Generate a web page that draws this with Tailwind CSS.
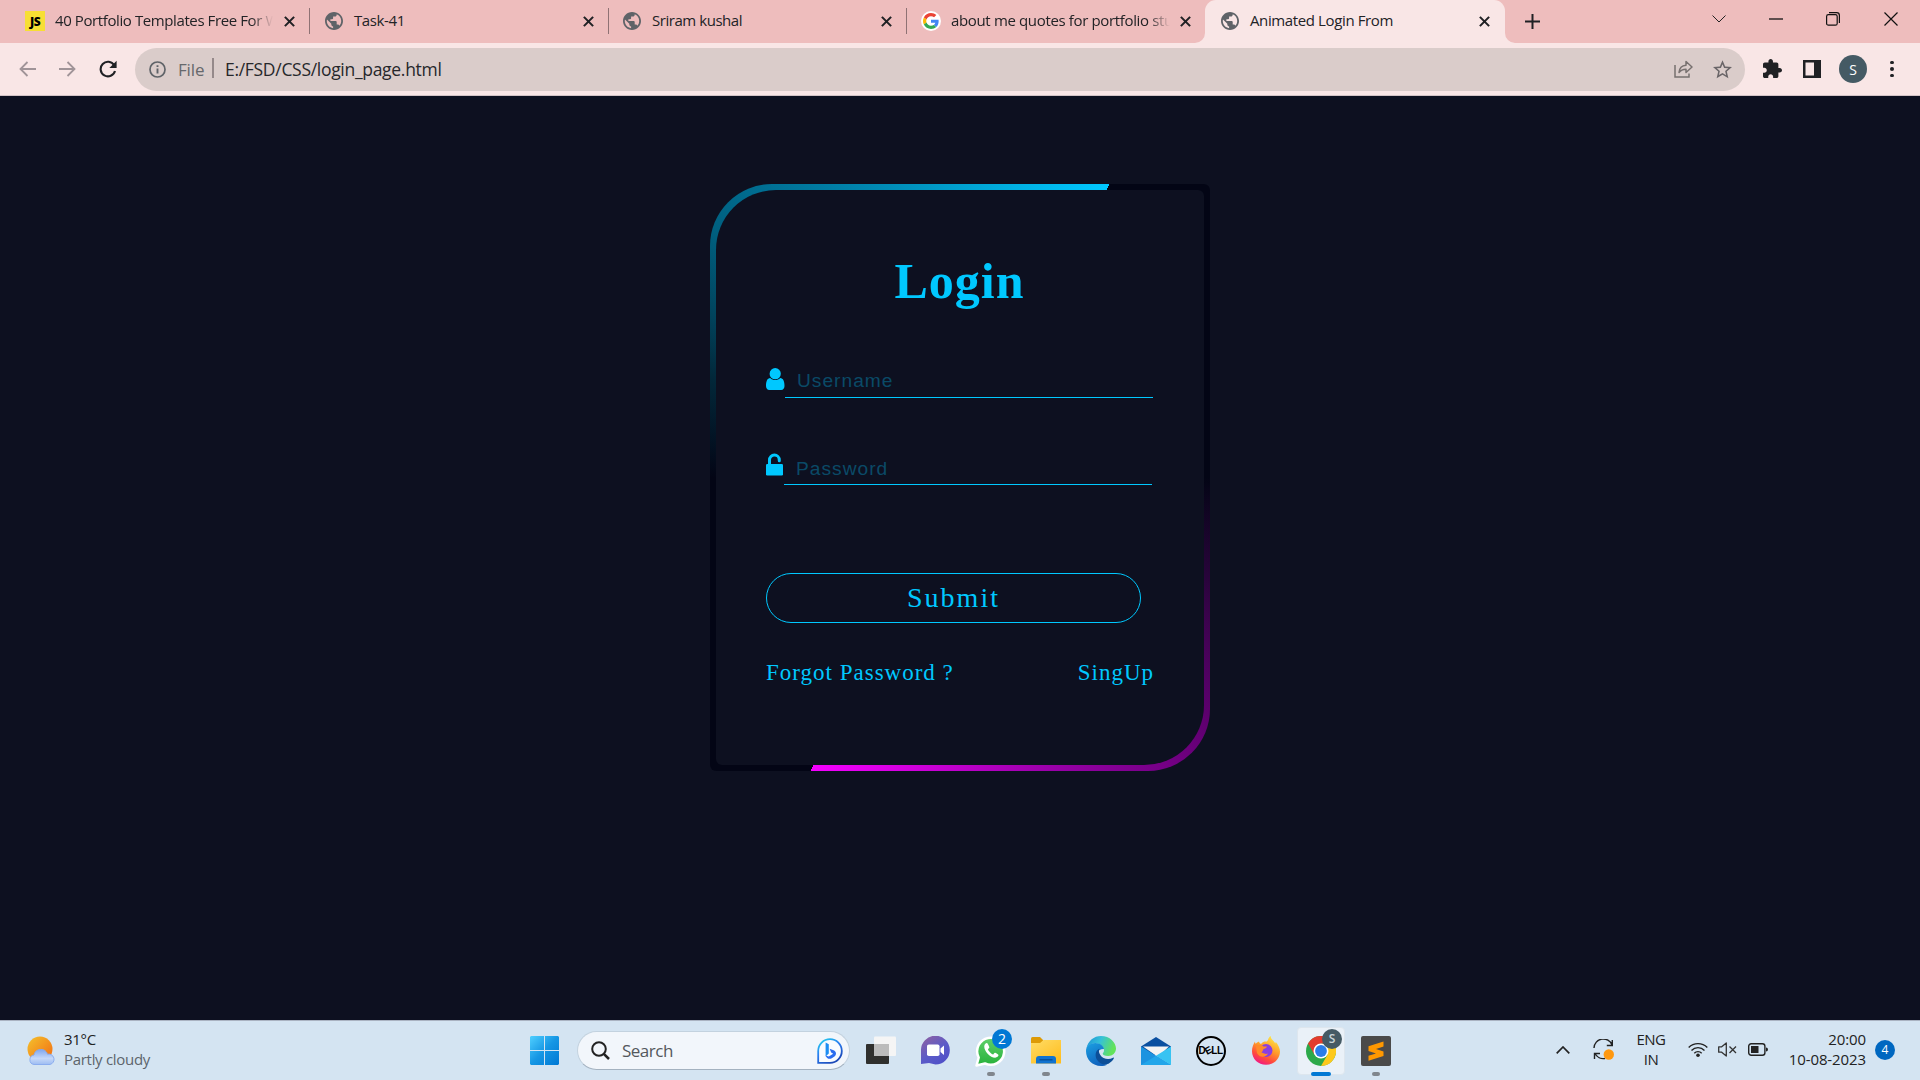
<!DOCTYPE html>
<html lang="en">
<head>
<meta charset="utf-8">
<title>Animated Login From</title>
<script src="https://cdn.jsdelivr.net/npm/@tailwindcss/browser@4"></script>
</head>
<body class="w-[1920px] h-[1080px] overflow-hidden bg-[#0d1020] font-['Open_Sans','Noto_Sans',sans-serif]">
<svg class="hidden">
  <symbol id="globe" viewBox="2 2 20 20"><path fill="#5f6368" d="M12 2C6.48 2 2 6.48 2 12s4.48 10 10 10 10-4.48 10-10S17.52 2 12 2zm-1 17.93c-3.95-.49-7-3.85-7-7.93 0-.62.08-1.21.21-1.79L9 15v1c0 1.1.9 2 2 2v1.93zm6.9-2.54c-.26-.81-1-1.39-1.9-1.39h-1v-3c0-.55-.45-1-1-1H8v-2h2c.55 0 1-.45 1-1V7h2c1.1 0 2-.9 2-2v-.41c2.93 1.19 5 4.06 5 7.41 0 2.08-.8 3.97-2.1 5.39z"/></symbol>
  <symbol id="close" viewBox="0 0 10 10"><path d="M.8.8l8.4 8.4M9.2.8L.8 9.2" stroke="#202124" stroke-width="1.9" fill="none"/></symbol>
</svg>
<div class="flex h-full flex-col">

  <!-- tab strip -->
  <header class="flex h-[43px] shrink-0 bg-[#eebdbd] text-[15px] text-[#222326]">
    <div class="flex h-[42px] w-[310px] items-center pl-[25px]">
      <div class="flex h-5 w-5 shrink-0 items-center justify-center bg-[#f7df33] text-[12px] font-extrabold text-black tracking-[-0.5px] pt-px">JS</div>
      <div class="ml-[10px] w-[218px] shrink-0 overflow-hidden whitespace-nowrap pb-[2px] tracking-[-0.4px] [mask-image:linear-gradient(90deg,#000_90%,transparent)]">40 Portfolio Templates Free For Web</div>
      <svg class="ml-[11px] h-[11px] w-[11px] shrink-0"><use href="#close"/></svg>
      <div class="ml-[14px] h-[26px] w-px shrink-0 bg-[#8f7274]"></div>
    </div>
    <div class="flex h-[42px] w-[299px] items-center pl-[15px]">
      <svg class="h-[18px] w-[18px] shrink-0"><use href="#globe"/></svg>
      <div class="ml-[11px] w-[229px] shrink-0 whitespace-nowrap pb-[2px] tracking-[-0.4px]">Task-41</div>
      <svg class="h-[11px] w-[11px] shrink-0"><use href="#close"/></svg>
      <div class="ml-[14px] h-[26px] w-px shrink-0 bg-[#8f7274]"></div>
    </div>
    <div class="flex h-[42px] w-[298px] items-center pl-[14px]">
      <svg class="h-[18px] w-[18px] shrink-0"><use href="#globe"/></svg>
      <div class="ml-[11px] w-[229px] shrink-0 whitespace-nowrap pb-[2px] tracking-[-0.45px]">Sriram kushal</div>
      <svg class="h-[11px] w-[11px] shrink-0"><use href="#close"/></svg>
      <div class="ml-[14px] h-[26px] w-px shrink-0 bg-[#8f7274]"></div>
    </div>
    <div class="flex h-[42px] w-[298px] items-center pl-[14px]">
      <svg class="h-5 w-5 shrink-0" viewBox="0 0 20 20"><circle cx="10" cy="10" r="10" fill="#fff"/><g transform="translate(2 2) scale(.333)"><path fill="#EA4335" d="M24 9.5c3.54 0 6.71 1.22 9.21 3.6l6.85-6.85C35.9 2.38 30.47 0 24 0 14.62 0 6.51 5.38 2.56 13.22l7.98 6.19C12.43 13.72 17.74 9.5 24 9.5z"/><path fill="#4285F4" d="M46.98 24.55c0-1.57-.15-3.09-.38-4.55H24v9.02h12.94c-.58 2.96-2.26 5.48-4.78 7.18l7.73 6c4.51-4.18 7.09-10.36 7.09-17.65z"/><path fill="#FBBC05" d="M10.53 28.59c-.48-1.45-.76-2.99-.76-4.59s.27-3.14.76-4.59l-7.98-6.19C.92 16.46 0 20.12 0 24s.92 7.54 2.56 10.78l7.97-6.19z"/><path fill="#34A853" d="M24 48c6.48 0 11.93-2.13 15.89-5.81l-7.73-6c-2.15 1.45-4.92 2.3-8.16 2.3-6.26 0-11.57-4.22-13.47-9.91l-7.98 6.19C6.51 42.62 14.62 48 24 48z"/></g></svg>
      <div class="ml-[10px] w-[219px] shrink-0 overflow-hidden whitespace-nowrap pb-[2px] tracking-[-0.35px] [mask-image:linear-gradient(90deg,#000_90%,transparent)]">about me quotes for portfolio student</div>
      <svg class="ml-[10px] h-[11px] w-[11px] shrink-0"><use href="#close"/></svg>
    </div>
    <div class="relative flex h-[43px] w-[300px] items-center rounded-t-[11px] bg-[#f9e6e6] pb-px pl-[16px]">
      <svg class="absolute bottom-0 -left-[10px] h-[10px] w-[10px]" viewBox="0 0 10 10"><path fill="#f9e6e6" d="M10 0v10H0A10 10 0 0010 0z"/></svg>
      <svg class="absolute bottom-0 -right-[10px] h-[10px] w-[10px]" viewBox="0 0 10 10"><path fill="#f9e6e6" d="M0 0v10h10A10 10 0 010 0z"/></svg>
      <svg class="h-[18px] w-[18px] shrink-0"><use href="#globe"/></svg>
      <div class="ml-[11px] w-[229px] shrink-0 whitespace-nowrap pb-[2px] tracking-[-0.38px]">Animated Login From</div>
      <svg class="h-[11px] w-[11px] shrink-0"><use href="#close"/></svg>
    </div>
    <div class="flex flex-1 items-center pl-[20px]">
      <svg class="h-[15px] w-[15px]" viewBox="0 0 15 15"><path d="M7.500 0v15M0 7.500h15" stroke="#202124" stroke-width="2"/></svg>
      <svg class="mb-[6px] ml-[172px] h-[8px] w-[14px]" viewBox="0 0 14 8"><path d="M.5.5L7 7 13.500.5" fill="none" stroke="#222"/></svg>
      <svg class="mb-[5px] ml-[43px] h-[2px] w-[14px]" viewBox="0 0 14 2"><path d="M0 1h14" stroke="#111" stroke-width="1.3"/></svg>
      <svg class="mb-[5px] ml-[43px] h-[14px] w-[14px]" viewBox="0 0 14 14"><rect x=".6" y="2.6" width="10.600" height="10.600" rx="1.800" fill="none" stroke="#111" stroke-width="1.2"/><path d="M3 .6h7.600a2.800 2.800 0 012.800 2.800V11" fill="none" stroke="#111" stroke-width="1.2"/></svg>
      <svg class="mb-[5px] ml-[44px] h-[14px] w-[14px]" viewBox="0 0 14 14"><path d="M.5.5l13 13M13.500.5l-13 13" stroke="#111" stroke-width="1.2"/></svg>
    </div>
  </header>

  <!-- toolbar -->
  <div class="flex h-[53px] shrink-0 items-center border-b border-[#d3c3c6] bg-[#f9e6e6] pl-[19px]">
    <svg class="mb-px h-4 w-[17px]" viewBox="0 0 17 16"><path d="M17 8H1.500M8.500 1L1.500 8l7 7" fill="none" stroke="#a09498" stroke-width="1.8"/></svg>
    <svg class="mb-px ml-[23px] h-4 w-[17px]" viewBox="0 0 17 16"><path d="M0 8h15.500M8.500 1l7 7-7 7" fill="none" stroke="#a09498" stroke-width="1.8"/></svg>
    <svg class="mb-px ml-[23px] h-[18px] w-[18px]" viewBox="0 0 18 18"><path d="M15.200 5.300A7.300 7.300 0 1016 11" fill="none" stroke="#202124" stroke-width="2.1"/><path d="M17.600.8v7.300h-7.200z" fill="#202124"/></svg>
    <div class="ml-[18px] flex h-[43px] w-[1610px] items-center rounded-full bg-[#daccca] pl-[14px]">
      <svg class="h-[17px] w-[17px]" viewBox="0 0 17 17"><circle cx="8.500" cy="8.500" r="7.500" fill="none" stroke="#5f6368" stroke-width="1.700"/><path d="M8.500 7.500v5M8.500 4.200v1.900" stroke="#5f6368" stroke-width="1.900"/></svg>
      <div class="ml-[12px] w-[34px] pt-px text-[17px] tracking-[-0.15px] text-[#66686c]">File</div>
      <div class="mb-[2px] h-5 w-[2px] bg-[#95898a]"></div>
      <div class="ml-[11px] flex-1 pt-px text-[17.500px] tracking-[-0.3px] text-[#26272b]">E:/FSD/CSS/login_page.html</div>
      <svg class="h-[18px] w-[19px]" viewBox="0 0 19 18"><path d="M1 5v12h14v-3.500" fill="none" stroke="#77706f" stroke-width="1.500"/><path d="M5 12.500c.4-4.500 3-7 7-7.300V1.500l6 5.500-6 5.500V9.200c-3 0-5.300.9-7 3.300z" fill="none" stroke="#77706f" stroke-width="1.500" stroke-linejoin="round"/></svg>
      <svg class="ml-[20px] mr-[13px] h-[19px] w-[19px]" viewBox="2 2 20 19.500"><path fill="#6a6568" d="M22 9.240l-7.190-.62L12 2 9.190 8.630 2 9.240l5.460 4.730L5.820 21 12 17.270 18.180 21l-1.630-7.030L22 9.240zM12 15.400l-3.760 2.270 1-4.280-3.320-2.880 4.380-.38L12 6.100l1.710 4.040 4.380.38-3.320 2.880 1 4.280L12 15.400z"/></svg>
    </div>
    <svg class="mb-[2px] ml-[18px] h-[19px] w-[19px]" viewBox="2 1 21 21"><path fill="#202124" d="M20.500 11H19V7c0-1.100-.9-2-2-2h-4V3.500C13 2.120 11.880 1 10.500 1S8 2.120 8 3.500V5H4c-1.100 0-1.990.9-1.990 2v3.800H3.500c1.490 0 2.700 1.210 2.700 2.700s-1.210 2.700-2.700 2.700H2V20c0 1.100.9 2 2 2h3.800v-1.500c0-1.490 1.210-2.700 2.700-2.700 1.490 0 2.700 1.210 2.700 2.700V22H17c1.100 0 2-.9 2-2v-4h1.500c1.380 0 2.500-1.120 2.500-2.500S21.880 11 20.500 11z"/></svg>
    <svg class="mb-px ml-[21px] h-[18px] w-[18px]" viewBox="0 0 18 18"><path fill="#202124" fill-rule="evenodd" d="M0 0h18v18H0zM2.500 2.500v13h8.500v-13z"/></svg>
    <div class="ml-[18px] flex h-[28px] w-[28px] items-center justify-center rounded-full bg-[#455a64] text-[14px] text-white">S</div>
    <div class="ml-[23px] flex flex-col gap-[3px]"><i class="h-[3.500px] w-[3.500px] rounded-full bg-[#202124]"></i><i class="h-[3.500px] w-[3.500px] rounded-full bg-[#202124]"></i><i class="h-[3.500px] w-[3.500px] rounded-full bg-[#202124]"></i></div>
  </div>

  <!-- login page -->
  <main class="flex h-[924px] shrink-0 justify-center pt-[88px]">
    <div class="h-[587px] w-[500px] rounded-[6px] rounded-tl-[62px] rounded-br-[62px] p-[6px] bg-[conic-gradient(from_-90deg,#030515_0deg,#02283a_22deg,#005f7f_45deg,#006d91_55deg,#00c8ff_117deg,#030515_117deg,#030515_180deg,#28043a_202deg,#5f0070_225deg,#7a008b_237deg,#f400ff_297deg,#030515_297deg,#030515_360deg)]">
      <form class="flex h-full w-full flex-col rounded-[6px] rounded-tl-[60px] rounded-br-[60px] bg-[#0d1020] pl-[50px] pt-[61px] font-['Liberation_Serif',serif] text-[#00c8ff]">
        <h1 class="h-[60px] w-[387px] text-center text-[50px] font-bold leading-[60px] tracking-[1px]">Login</h1>
        <div class="mt-[51px] flex h-[36px]">
          <svg class="mt-[6px] h-[22px] w-[19px]" viewBox="0 0 19 22"><circle cx="9.200" cy="5.700" r="5.600" fill="#00c8ff"/><path fill="#00c8ff" d="M4.200 10c1.400 1.400 3.100 2 5 2s3.700-.6 5-2c3 .2 4.300 3.200 4.300 8 0 2.300-1.200 4-3.300 4H3.300C1.200 22 0 20.300 0 18c0-4.800 1.300-7.800 4.200-8z"/></svg>
          <div class="h-[36px] w-[368px] border-b border-[#00c8ff] pl-[12px] font-['Liberation_Sans',sans-serif] text-[19.2px] leading-[38px] tracking-[1px] text-[#0a4a67]">Username</div>
        </div>
        <div class="mt-[51px] flex h-[36px]">
          <svg class="mt-[4px] h-[23px] w-[18px]" viewBox="0 0 18 23"><rect x="0" y="11" width="17" height="11.500" rx="1.300" fill="#00c8ff"/><path d="M3.500 11.500V7a4.900 4.900 0 019.800 0v.8" fill="none" stroke="#00c8ff" stroke-width="3" stroke-linecap="round"/></svg>
          <div class="h-[36px] w-[368px] border-b border-[#00c8ff] pl-[12px] font-['Liberation_Sans',sans-serif] text-[19.2px] leading-[39px] tracking-[1px] text-[#0a4a67]">Password</div>
        </div>
        <div class="mt-[88px] h-[50px] w-[375px] rounded-full border border-[#00c8ff] text-center text-[28px] leading-[47px] tracking-[2px]">Submit</div>
        <div class="mt-[36px] flex w-[388px] justify-between text-[23px] leading-[28px] tracking-[1px]"><span>Forgot Password ?</span><span>SingUp</span></div>
      </form>
    </div>
  </main>

  <!-- taskbar -->
  <footer class="flex h-[60px] shrink-0 border-t border-[#aab3c2] bg-[#d4e4f2] text-[15px]">
    <div class="flex w-[517px] items-center pl-[27px]">
      <svg class="h-[30px] w-[29px]" viewBox="0 0 29 30"><defs><linearGradient id="sun" x2="1" y2="1"><stop stop-color="#f4c22c"/><stop offset="1" stop-color="#f26a12"/></linearGradient><linearGradient id="cl" x2="0" y2="1"><stop stop-color="#7fa6ee"/><stop offset=".6" stop-color="#c5d8f8"/><stop offset="1" stop-color="#9dbcf2"/></linearGradient></defs><circle cx="13" cy="13" r="12.500" fill="url(#sun)"/><path d="M7 28.500a4.800 4.800 0 010-9.500 7 7 0 0113.500-.8A5.200 5.200 0 0123 28.500z" fill="url(#cl)" stroke="#86a9ee" stroke-width=".9"/></svg>
      <div class="ml-[8px] pb-[4px] leading-[20px] tracking-[-0.3px]"><div class="text-[#222]">31°C</div><div class="text-[#5d646c]">Partly cloudy</div></div>
    </div>
    <div class="flex items-center">
      <div class="flex w-[55px] justify-center">
        <svg class="h-[29px] w-[29px]" viewBox="0 0 29 29"><defs><linearGradient id="win" gradientUnits="userSpaceOnUse" x2="29" y2="29"><stop stop-color="#4fcfff"/><stop offset=".5" stop-color="#1596e4"/><stop offset="1" stop-color="#0078d4"/></linearGradient></defs><path fill="url(#win)" d="M1 0h13v14H0V1zM15 0h13l1 1v13H15zM0 15h14v14H1l-1-1zM15 15h14v13l-1 1H15z"/></svg>
      </div>
      <div class="ml-[5px] flex h-[39px] w-[273px] items-center rounded-full border border-[#c3d2df] border-b-[#a4b2c0] bg-[#f2f6fb] pl-[13px]">
        <svg class="h-[19px] w-[19px]" viewBox="0 0 19 19"><circle cx="8" cy="8" r="6.800" fill="none" stroke="#222" stroke-width="2"/><path d="M12.800 12.800L18 18" stroke="#222" stroke-width="2.500"/></svg>
        <div class="ml-[12px] flex-1 text-[17px] tracking-[-0.5px] text-[#54585d]">Search</div>
        <svg class="mr-[6px] h-[26px] w-[26px]" viewBox="0 0 26 26"><defs><linearGradient id="bing" x2=".6" y2="1"><stop stop-color="#22d8ee"/><stop offset=".5" stop-color="#2a7df0"/><stop offset="1" stop-color="#1c49b8"/></linearGradient></defs><path d="M1.200 24.800V13A11.800 11.800 0 1113 24.800z" fill="#f8fbff" stroke="url(#bing)" stroke-width="1.800"/><path d="M8.600 4.600l3.200 1.600v9.200l-3.200 3z" fill="#1c8df2"/><path d="M8.600 17.500c1 3.400 4 4 6.200 2.700l2.300-1.400c3-2 2.200-5.400-.5-6.500l-4-1.600 1.600 3.900 2 1.100-4.400 2.700z" fill="#2a6cf0"/></svg>
      </div>
      <div class="ml-[3px] flex">
        <div class="flex h-[56px] w-[55px] items-center justify-center"><svg class="h-[29px] w-[30px]" viewBox="0 0 30 29"><rect y="8" width="23" height="20" rx="1" fill="#30302e"/><rect x="8" y=".5" width="22" height="19.500" rx="1" fill="#f5f5f5"/><rect x="8" y="8" width="15" height="12" fill="#bcbcbc"/></svg></div>
        <div class="flex h-[56px] w-[55px] items-center justify-center"><svg class="h-[29px] w-[29px]" viewBox="0 0 29 29"><defs><linearGradient id="chat" x2=".7" y2="1"><stop stop-color="#93619f"/><stop offset=".6" stop-color="#5b5bc8"/><stop offset="1" stop-color="#5050c8"/></linearGradient></defs><path d="M0 28V14.500A14.400 14.400 0 1114.500 28.500L8 27z" fill="url(#chat)"/><rect x="6" y="8.500" width="12.500" height="11.500" rx="1.800" fill="#fff"/><path d="M19.500 12.500l3.500-3v9.500l-3.500-3z" fill="#fff"/></svg></div>
        <div class="relative flex h-[56px] w-[55px] items-center justify-center"><svg class="h-[32px] w-[32px]" viewBox="0 0 32 32"><defs><linearGradient id="wa" x2="0" y2="1"><stop stop-color="#5fd06a"/><stop offset="1" stop-color="#27b13b"/></linearGradient></defs><path d="M1.500 30.500l2.200-8A13.500 13.500 0 1110 28.500z" fill="url(#wa)" stroke="#fff" stroke-width="2.500" stroke-linejoin="round"/><path transform="translate(7 6.500) scale(.75)" fill="#fff" d="M6.500 2C5 2 3 4 3 6.500 3 13 11 21.500 17.500 21.500 20 21.500 22 19.500 22 18c0-.6-3.800-3-4.700-3-1 0-1.800 2.200-2.600 2.200C13.500 17.200 8 12 8 10.500 8 9.500 9.800 8.800 9.800 8 9.800 7 7.600 2 6.500 2z"/></svg>
          <div class="absolute left-[29px] top-[6px] flex h-5 w-5 items-center justify-center rounded-full bg-[#0078d4] text-[14px] leading-none text-white">2</div><i class="absolute left-[24px] bottom-[3px] h-1 w-2 rounded-full bg-[#80868d]"></i></div>
        <div class="relative flex h-[56px] w-[55px] items-center justify-center"><svg class="h-[27px] w-[30px]" viewBox="0 0 30 27"><defs><linearGradient id="fold" x2=".8" y2="1"><stop stop-color="#ffdc66"/><stop offset="1" stop-color="#ffbe20"/></linearGradient></defs><path d="M0 1.500Q0 0 1.500 0H9l3 3v4H0z" fill="#dd9a06"/><path d="M0 6h9l3.500-3H30v23.500H0z" fill="url(#fold)"/><path d="M5 26.500V22q0-3 3-3h14q3 0 3 3v4.500z" fill="#1173cf"/><path d="M8.500 22.800h13" stroke="#07498f" stroke-width="1.200"/></svg><i class="absolute left-[24px] bottom-[3px] h-1 w-2 rounded-full bg-[#80868d]"></i></div>
        <div class="flex h-[56px] w-[55px] items-center justify-center"><svg class="h-[30px] w-[30px]" viewBox="0 0 30 30"><defs><linearGradient id="e1" x2="1" y2=".3"><stop stop-color="#1b8fd8"/><stop offset=".5" stop-color="#35c1d8"/><stop offset="1" stop-color="#63e35a"/></linearGradient><linearGradient id="e2" x2=".5" y2="1"><stop stop-color="#1ba0e2"/><stop offset="1" stop-color="#0f62bd"/></linearGradient></defs><path d="M.4 12.500C2 4.800 8 0 15 0c8.800 0 15 6.500 15 12.500 0 4.500-3.500 7.500-7.800 7.500-3.700 0-5.500-1.200-5.500-2.200 0-.8 1.300-1.300 1.300-3.600C18 10 13.500 7.200 9.300 7.200 4.500 7.200 1.500 10 .4 12.500z" fill="url(#e1)"/><path d="M0 15C0 10 4.200 7.100 9.300 7.100c4.700 0 8.200 2.800 8.700 5.900-6-.5-9 5.500-5.500 10.500 2 3 5.500 5 9 5-2 1-4.300 1.500-6.500 1.500C6.500 30 0 23.500 0 15z" fill="url(#e2)"/><path d="M13.500 12.700c-4 1.500-5 7-2.500 11 3 5 9 6 12.500 3.300 1.800-1.200 3.500-3 4.300-4.600.3-.7-.2-1-.8-.6-4.500 2.400-10.500.9-12.700-2.800-1.500-2.400-1.800-4.500-.8-6.300z" fill="#0c4f98"/></svg></div>
        <div class="flex h-[56px] w-[55px] items-center justify-center"><svg class="h-[28px] w-[30px]" viewBox="0 0 30 28"><path d="M0 9.500L15 0l15 9.500V18H0z" fill="#0a4fa0"/><path d="M2 9.500h26L17 20z" fill="#f4f4f4"/><path d="M0 9.500L30 28H0z" fill="#1c93e0"/><path d="M30 9.500V28L15 18.700z" fill="#37c3f2"/><path d="M0 28L15 18.700 30 28z" fill="#22a6ea"/></svg></div>
        <div class="flex h-[56px] w-[55px] items-center justify-center"><div class="flex h-[30px] w-[30px] items-center justify-center rounded-full border-2 border-black font-['Liberation_Sans',sans-serif] text-[10px] font-bold tracking-[-0.5px] text-black"><span>D</span><span class="-rotate-[28deg]">E</span><span>LL</span></div></div>
        <div class="flex h-[56px] w-[55px] items-center justify-center"><svg class="h-[29px] w-[28px]" viewBox="0 0 28 29"><defs><linearGradient id="ff" x1=".8" x2=".3" y2="1"><stop stop-color="#fff04a"/><stop offset=".45" stop-color="#ff9a28"/><stop offset=".75" stop-color="#ff4a3c"/><stop offset="1" stop-color="#f0158a"/></linearGradient></defs><path d="M3 5.500c0 1 .2 1.700.6 2.300C4.500 6.800 5.600 6 7 5.500c.2 1.200.9 2 2 2.600 1.900-2.600 4-2.800 5.800-2.500L16 4c.5-2 1.600-3.400 2.700-4 .1 2.500 1.400 3.600 3 5.200.7.700 1 1.500 1.500 2.400l.6-1.600C26 8.500 28 12 28 15.500 28 23 21.800 28.800 14 28.800S0 23 0 15c0-4 1.500-7 3-9.500z" fill="url(#ff)"/><circle cx="14" cy="14.500" r="6.500" fill="#8a3fe0"/><path d="M4 10c3-1.600 5.500-1.200 7.500.5h3.500c-.3 1.800-2.300 2.200-3.500 2.500-.8 1.500-.5 2.200-2 3.500 3 .8 4 2 6.500 1-1.500 4-9 4.500-11-.5z" fill="#ff8a2a"/></svg></div>
        <div class="relative flex h-[56px] w-[55px] items-center justify-center"><div class="flex h-[48px] w-[48px] items-center justify-center rounded-[4px] border border-[#dde6ee] bg-[#eaf1f8]"><svg class="h-[30px] w-[30px]" viewBox="0 0 30 30"><circle cx="15" cy="15" r="15" fill="#2ca94a"/><path d="M2 7.500A15 15 0 0128 7.500H15L8.500 18.700z" fill="#e33b2e"/><path d="M28 7.500A15 15 0 0115 30l6.500-11.200L21 7.500z" fill="#fdc91c"/><circle cx="15" cy="15" r="7.500" fill="#fff"/><circle cx="15" cy="15" r="5.900" fill="#2b7de9"/></svg></div><div class="absolute left-[29px] top-[6px] flex h-5 w-5 items-center justify-center rounded-full bg-[#455a64] text-[12px] leading-none font-semibold text-[#c9d2d6]">S</div><i class="absolute left-[18px] bottom-[3px] h-1 w-5 rounded-full bg-[#0078d4]"></i></div>
        <div class="relative flex h-[56px] w-[55px] items-center justify-center"><svg class="h-[30px] w-[30px]" viewBox="0 0 30 30"><rect width="30" height="30" rx="2" fill="#4a4a4a"/><path d="M7.500 10.200L22.500 5.500v5l-7.500 2.400 7.500 2.500V20l-15 4.800v-5l7.500-2.400-7.500-2.500z" fill="#ff9800"/></svg><i class="absolute left-[24px] bottom-[3px] h-1 w-2 rounded-full bg-[#80868d]"></i></div>
      </div>
    </div>
    <div class="flex flex-1 items-center pb-[2px] pl-[153px] text-[#222]">
      <svg class="h-[8px] w-[14px]" viewBox="0 0 14 8"><path d="M.7 7.300L7 1l6.300 6.300" fill="none" stroke="#222" stroke-width="1.700"/></svg>
      <svg class="ml-[23px] h-[21px] w-[21px]" viewBox="0 0 21 21"><path d="M1 9A9.300 9.300 0 0119 6M19.300 1v5.500h-5.500M12 19.500A9.300 9.300 0 012 14.500M1.500 20v-5.500H7" fill="none" stroke="#222" stroke-width="1.400"/><circle cx="15.800" cy="15.500" r="5.200" fill="#ff9810"/></svg>
      <div class="ml-[19px] w-[36px] pb-[2px] text-center leading-[20px] tracking-[-0.5px]">ENG<br>IN</div>
      <svg class="ml-[19px] h-[15px] w-[20px]" viewBox="0 0 20 15"><path d="M.7 5.500a13 13 0 0118.600 0M3.500 8.400a9 9 0 0113 0M6.300 11.200a5.200 5.200 0 017.400 0" fill="none" stroke="#222" stroke-width="1.400"/><circle cx="10" cy="13.200" r="1.800" fill="#222"/></svg>
      <svg class="ml-[10px] h-[15px] w-[19px]" viewBox="0 0 19 15"><path d="M.7 4.800h3L8.300.9v13.200L3.700 10.200h-3z" fill="none" stroke="#333" stroke-width="1.300" stroke-linejoin="round"/><path d="M11.500 4.500l6.500 6.500m0-6.500L11.500 11" stroke="#333" stroke-width="1.300"/></svg>
      <svg class="ml-[11px] h-[13px] w-[20px]" viewBox="0 0 20 13"><rect x=".7" y=".7" width="16.200" height="11.600" rx="2.500" fill="none" stroke="#222" stroke-width="1.400"/><rect x="3" y="3" width="7.500" height="7" fill="#222"/><path d="M18 4.500q2 0 2 2t-2 2z" fill="#222"/></svg>
      <div class="ml-[18px] w-[80px] whitespace-nowrap pb-[2px] text-right leading-[20px] tracking-[-0.1px]">20:00<br>10-08-2023</div>
      <div class="ml-[9px] flex h-5 w-5 items-center justify-center rounded-full bg-[#0067c0] text-[12px] text-white">4</div>
    </div>
  </footer>
</div>
</body>
</html>
